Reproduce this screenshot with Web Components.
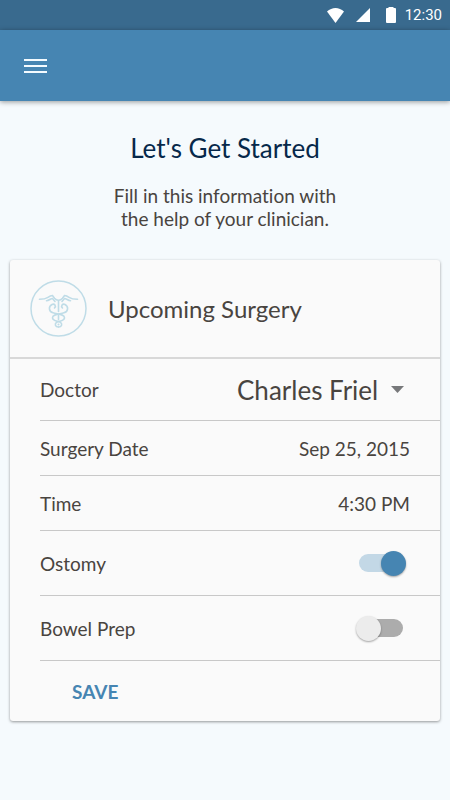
<!DOCTYPE html>
<html lang="en">
<head>
<meta charset="utf-8">
<meta name="viewport" content="width=device-width, initial-scale=1">
<title>Let's Get Started</title>
<style>
  html { height: 100%; }
  body {
    --blue: #4685b2;
    --ink: #49443f;
    --line: #c8c8c8;
    margin: 0;
    min-height: 100%;
    background: #f5fafd;
    color: var(--ink);
    font-family: Lato, "Noto Sans", sans-serif;
    font-size: 19px;
    line-height: 23px;
    font-variant-ligatures: none;
  }
</style>
</head>
<body>
<surgery-app>
  <status-bar time="12:30"></status-bar>
  <app-bar></app-bar>
  <page-intro>
    <span slot="title">Let's Get Started</span>
    Fill in this information with<br>the help of your clinician.
  </page-intro>
  <form-card heading="Upcoming Surgery">
    <select-row label="Doctor" options="Charles Friel"></select-row>
    <picker-row label="Surgery Date" value="Sep 25, 2015"></picker-row>
    <picker-row label="Time" value="4:30 PM"></picker-row>
    <switch-row label="Ostomy" checked></switch-row>
    <switch-row label="Bowel Prep"></switch-row>
    <save-action slot="actions">Save</save-action>
  </form-card>
</surgery-app>

<script>
class BaseElement extends HTMLElement {
  connectedCallback() {
    if (this.shadowRoot) return;
    const template = document.createElement('template');
    template.innerHTML = this.render();
    this.attachShadow({ mode: 'open' }).append(template.content.cloneNode(true));
  }
  attr(name) { return this.getAttribute(name) || ''; }
}

customElements.define('surgery-app', class extends BaseElement {
  render() {
    return `<style>
      :host { display: flex; flex-direction: column; }
    </style><slot></slot>`;
  }
});

customElements.define('status-bar', class extends BaseElement {
  render() {
    return `<style>
      :host { display: flex; align-items: center; justify-content: flex-end; box-sizing: border-box;
        height: 30px; padding-right: 8px; background: #396a8e; color: #fff;
        font: 15px/20px Roboto, sans-serif; }
      svg { display: block; fill: #fff; }
      .wifi { margin-right: 12px; }
      .cell { margin-right: 16px; }
      .battery { margin-right: 9px; }
    </style>
    <svg class="wifi" width="17" height="15" viewBox="0 0 17 15" aria-hidden="true"><path d="M8.500 15 0 3.600C5-1.100 12-1.100 17 3.600Z"/></svg>
    <svg class="cell" width="14" height="14" viewBox="0 0 14 14" aria-hidden="true"><path d="M14 0V14H0Z"/></svg>
    <svg class="battery" width="10" height="16" viewBox="0 0 10 16" aria-hidden="true"><path d="M2.500 0H7.500V1H9Q10 1 10 2V15Q10 16 9 16H1Q0 16 0 15V2Q0 1 1 1H2.500Z"/></svg>
    <time>${this.attr('time')}</time>`;
  }
});

customElements.define('app-bar', class extends BaseElement {
  render() {
    return `<style>
      :host { display: flex; align-items: center; height: 71px; padding: 0 12px;
        background: var(--blue); box-shadow: 0 1px 5px rgba(0, 0, 0, .4); }
      button { display: grid; place-items: center; width: 46px; height: 46px; padding: 0;
        border: 0; background: none; cursor: pointer; }
    </style>
    <button type="button" aria-label="Menu">
      <svg width="24" height="16" viewBox="0 0 24 16" stroke="#f4fbff" stroke-width="2" aria-hidden="true"><path d="M1 2H24M1 8H24M1 14H24"/></svg>
    </button>`;
  }
});

customElements.define('page-intro', class extends BaseElement {
  render() {
    return `<style>
      :host { display: block; padding: 31px 16px 30px; text-align: center; }
      h1 { margin: 0 0 20px; color: #06284a; font-size: 26px; line-height: 32px; font-weight: 400; }
      p { margin: 0; }
    </style>
    <h1><slot name="title"></slot></h1>
    <p><slot></slot></p>`;
  }
});

customElements.define('medical-badge', class extends BaseElement {
  render() {
    return `<style>:host, svg { display: block; }</style>
    <svg width="58" height="58" viewBox="0 0 58 58" fill="none" stroke="#bfdce7" stroke-linecap="round" aria-hidden="true">
      <circle cx="28.500" cy="28.500" r="27.500" stroke-width="1.500"/>
      <g stroke-width="1.600">
        <path d="M9.500 19.300C14 19.300 16 18.600 18 17.300C19.500 16.300 20.500 15.700 22.500 15.500L24.500 18.300C25.500 19.500 27 20.200 28.500 20.200C30 20.200 31.500 19.500 32.500 18.300L34.500 15.500C36.500 15.700 37.500 16.300 39 17.300C41 18.600 43 19.300 47.500 19.300"/>
        <path d="M16.500 20.800C19 20.800 20.500 18.500 22.500 18.500L25 21.500M40.500 20.800C38 20.800 36.500 18.500 34.500 18.500L32 21.500"/>
        <path d="M28.500 21V31.500M28.500 35.500V39.500"/>
        <path d="M24.500 28C26.500 26 24.500 23.300 22 24.500C18.300 26.500 18.500 31.500 23 32.800C28 34.200 34.500 34 34.500 37.800C34.500 41.500 29 40.800 26.500 42.300C24.500 43.800 25 47 28.500 47"/>
        <path d="M32.500 28C30.500 26 32.500 23.300 35 24.500C38.700 26.500 38.500 31.500 34 32.800C29 34.200 22.500 34 22.500 37.800C22.500 41.500 28 40.800 30.500 42.300C32.500 43.800 32 47 28.500 47"/>
      </g>
      <circle cx="28.500" cy="44.500" r="1" fill="#bfdce7" stroke="none"/>
    </svg>`;
  }
});

customElements.define('form-card', class extends BaseElement {
  render() {
    return `<style>
      :host { display: block; margin: 0 10px 24px; background: #fafafa; border-radius: 3px;
        box-shadow: 0 1px 3px rgba(0, 0, 0, .4); }
      header { display: flex; align-items: center; gap: 20px; height: 97px; padding: 0 20px;
        border-bottom: 2px solid #d8d8d8; }
      h2 { margin: 0; font-size: 24px; line-height: 32px; font-weight: 400; }
      .rows { margin-left: 30px; }
    </style>
    <form>
      <header><medical-badge></medical-badge><h2>${this.attr('heading')}</h2></header>
      <div class="rows"><slot></slot></div>
      <slot name="actions"></slot>
    </form>`;
  }
});

const rowStyle = `
  :host { display: flex; align-items: center; justify-content: space-between; box-sizing: border-box;
    padding-right: 30px; border-bottom: 1px solid var(--line); }
  button, select { margin: 0; padding: 0; border: 0; background: none; color: inherit; font: inherit; cursor: pointer; }
`;

customElements.define('select-row', class extends BaseElement {
  render() {
    const options = this.attr('options').split('|').map(o => `<option>${o}</option>`).join('');
    return `<style>${rowStyle}
      :host { height: 62px; }
      .box { display: grid; align-items: center; }
      .box > * { grid-area: 1 / 1; }
      select { appearance: none; padding-right: 31px; font-size: 26px; line-height: 34px; }
      svg { justify-self: end; margin-right: 6px; fill: #77787a; pointer-events: none; }
    </style>
    <label for="field">${this.attr('label')}</label>
    <div class="box">
      <select id="field">${options}</select>
      <svg width="13" height="7" viewBox="0 0 13 7" aria-hidden="true"><path d="M0 0H13L6.500 7Z"/></svg>
    </div>`;
  }
});

customElements.define('picker-row', class extends BaseElement {
  render() {
    return `<style>${rowStyle}
      :host { height: 55px; }
    </style>
    <label for="field">${this.attr('label')}</label>
    <button type="button" id="field">${this.attr('value')}</button>`;
  }
});

customElements.define('switch-row', class extends BaseElement {
  render() {
    return `<style>${rowStyle}
      :host { height: 65px; }
      input { appearance: none; display: grid; align-items: center; width: 50px; height: 26px;
        margin: 0 4px; cursor: pointer; }
      input::before, input::after { content: ""; grid-area: 1 / 1; }
      input::before { height: 18px; margin: 0 3px; border-radius: 9px; background: #acacac; }
      input::after { width: 25px; height: 25px; border-radius: 50%; background: #ececec;
        box-shadow: 0 1px 2px rgba(0, 0, 0, .35); }
      input:checked::before { background: #c3d8e6; }
      input:checked::after { justify-self: end; background: var(--blue); }
    </style>
    <label for="field">${this.attr('label')}</label>
    <input type="checkbox" role="switch" id="field"${this.hasAttribute('checked') ? ' checked' : ''}>`;
  }
});

customElements.define('save-action', class extends BaseElement {
  render() {
    return `<style>
      :host { display: flex; align-items: center; height: 60px; padding-left: 54px; }
      button { margin: 0; padding: 4px 8px; border: 0; background: none; color: var(--blue);
        font: inherit; font-weight: 700; text-transform: uppercase; cursor: pointer; }
    </style>
    <button type="button"><slot></slot></button>`;
  }
});
</script>
</body>
</html>
